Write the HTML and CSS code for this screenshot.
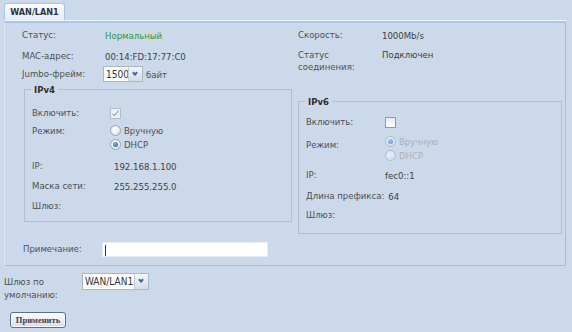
FILE: index.html
```html
<!DOCTYPE html>
<html lang="ru">
<head>
    <meta charset="UTF-8">
    <title>WAN/LAN1</title>
    <link rel="stylesheet" href="styles.css">
</head>
<body>
    <div class="tab-strip">
        <div class="tab">WAN/LAN1</div>
    </div>
    <div class="strip-line"></div>

    <div class="panel">
        <div class="columns">
            <div class="col col-left">
                <div class="row r22">
                    <span class="label">Статус:</span>
                    <span class="value ok">Нормальный</span>
                </div>
                <div class="row r20">
                    <span class="label">MAC-адрес:</span>
                    <span class="value">00:14:FD:17:77:C0</span>
                </div>
                <div class="row r16">
                    <span class="label">Jumbo-фрейм:</span>
                    <span class="combo combo-mtu">
                        <span class="combo-text">1500</span>
                        <span class="combo-trigger"></span>
                    </span>
                    <span class="unit">байт</span>
                </div>

                <fieldset class="group ipv4">
                    <legend>IPv4</legend>
                    <div class="row r20">
                        <span class="label">Включить:</span>
                        <span class="check checked disabled"></span>
                    </div>
                    <div class="row mode">
                        <span class="label">Режим:</span>
                        <div class="radios">
                            <label class="radio-line"><span class="radio"></span>Вручную</label>
                            <label class="radio-line"><span class="radio on"></span>DHCP</label>
                        </div>
                    </div>
                    <div class="row r20 gap5">
                        <span class="label">IP:</span>
                        <span class="value pad">192.168.1.100</span>
                    </div>
                    <div class="row r20">
                        <span class="label">Маска сети:</span>
                        <span class="value pad">255.255.255.0</span>
                    </div>
                    <div class="row r20">
                        <span class="label">Шлюз:</span>
                    </div>
                </fieldset>
            </div>

            <div class="col col-right">
                <div class="row r22">
                    <span class="label">Скорость:</span>
                    <span class="value">1000Mb/s</span>
                </div>
                <div class="row two-line">
                    <span class="label">Статус<br>соединения:</span>
                    <span class="value">Подключен</span>
                </div>

                <fieldset class="group ipv6">
                    <legend>IPv6</legend>
                    <div class="row r20">
                        <span class="label">Включить:</span>
                        <span class="check"></span>
                    </div>
                    <div class="row mode mode6">
                        <span class="label">Режим:</span>
                        <div class="radios disabled">
                            <label class="radio-line"><span class="radio on"></span>Вручную</label>
                            <label class="radio-line"><span class="radio"></span>DHCP</label>
                        </div>
                    </div>
                    <div class="row r20 gap3">
                        <span class="label">IP:</span>
                        <span class="value">fec0::1</span>
                    </div>
                    <div class="row r22">
                        <span class="label wide">Длина префикса:</span>
                        <span class="value">64</span>
                    </div>
                    <div class="row r16">
                        <span class="label">Шлюз:</span>
                    </div>
                </fieldset>
            </div>
        </div>

        <div class="row r16 note">
            <span class="label">Примечание:</span>
            <span class="text-field"><span class="caret"></span></span>
        </div>
    </div>

    <div class="row gateway">
        <span class="label">Шлюз по<br>умолчанию:</span>
        <span class="combo combo-gw">
            <span class="combo-text">WAN/LAN1</span>
            <span class="combo-trigger"></span>
        </span>
    </div>

    <button class="apply">Применить</button>
</body>
</html>
```

FILE: styles.css
```css
body {
    margin: 0;
    padding: 0 6px 0 4px;
    background: #cbd9ea;
    font-family: 'DejaVu Sans Condensed', 'Liberation Sans', sans-serif;
    font-size: 9.5px;
    color: #3a3a3a;
}
.tab-strip {
    height: 20px;
    display: flex;
    align-items: flex-end;
}
.tab {
    width: 59px;
    height: 16px;
    line-height: 17px;
    text-align: center;
    font-weight: bold;
    font-size: 9px;
    color: #2e3440;
    border: 1px solid #aac3e6;
    border-bottom: none;
    border-radius: 3px 3px 0 0;
    background: linear-gradient(#fbfdff, #e3ecf7);
}
.strip-line {
    height: 1px;
    background: #eef4fb;
    border-bottom: 2px solid #aac6ee;
}
.panel {
    border-left: 1px solid #dfe8f2;
    border-right: 1px solid #adbccd;
    border-bottom: 1px solid #adbccd;
    padding-bottom: 8px;
}
.columns {
    display: flex;
}
.col-left {
    width: 270px;
    padding: 1px 0 0 17px;
}
.col-right {
    flex: 1;
    padding: 1px 3px 0 6px;
}
.row {
    display: flex;
    align-items: center;
}
.r22 { height: 22px; }
.r20 { height: 20px; }
.r16 { height: 16px; }
.gap5 { margin-top: 5px; }
.gap3 { margin-top: 3px; }
.label {
    width: 81px;
    flex-shrink: 0;
    color: #505050;
    line-height: 12px;
    white-space: nowrap;
}
.col-right > .row > .label {
    width: 82px;
}
.value {
    padding-left: 2px;
    color: #3f3f3f;
}
.value.ok {
    color: #2f9a2f;
}
.two-line {
    align-items: flex-start;
    padding-top: 3px;
    height: 26px;
}
.two-line .label,
.two-line .value {
    line-height: 12px;
}

/* combo box */
.combo {
    display: flex;
    height: 16px;
    border: 1px solid #a9b6c6;
    box-sizing: border-box;
    background: #fff;
}
.combo-text {
    flex: 1;
    min-width: 0;
    overflow: hidden;
    white-space: nowrap;
    padding-left: 2px;
    line-height: 15px;
    font-size: 10px;
    color: #333;
}
.combo-trigger {
    width: 13px;
    flex-shrink: 0;
    border-left: 1px solid #c3cbd6;
    background: linear-gradient(#f4f5f7, #d7dbe2);
    position: relative;
}
.combo-trigger::after {
    content: "";
    position: absolute;
    left: 4px;
    top: 4px;
    width: 2px;
    height: 2px;
    border-right: 2px solid #3a66b4;
    border-bottom: 2px solid #3a66b4;
    transform: rotate(45deg);
}
.combo-mtu {
    width: 40px;
}
.combo-gw {
    width: 67px;
    height: 17px;
}
.combo-gw .combo-text {
    line-height: 16px;
}
.unit {
    margin-left: 3px;
    color: #505050;
}

/* fieldsets */
.group {
    margin: 1px 0 0 2px;
    padding: 7px 0 5px 7px;
    border: 1px solid #b3bfcd;
    min-width: 0;
}
.group legend {
    padding: 0 3px;
    margin-left: -1px;
    font-weight: bold;
    color: #2e2e2e;
    line-height: 13px;
}
.ipv4 .label {
    width: 78px;
}
.ipv4 .value.pad {
    padding-left: 4px;
}
.ipv6 {
    margin: 20px 0 0 0;
    padding: 4px 0 10px 7px;
}
.ipv6 .label {
    width: 79px;
}
.ipv6 .label.wide {
    width: auto;
    margin-right: 4px;
}
.ipv6 .value {
    padding-left: 0;
}

.mode {
    align-items: flex-start;
}
.mode .label {
    line-height: 14px;
    padding-top: 1px;
}
.mode6 {
    margin-top: 2px;
}
.mode6 .label {
    padding-top: 4px;
}
.radios {
    display: flex;
    flex-direction: column;
}
.radio-line {
    display: flex;
    align-items: center;
    height: 14px;
    color: #505050;
}
.radios.disabled .radio-line {
    color: #a8b0bb;
}
.radios.disabled .radio {
    opacity: 0.55;
}

/* custom checkbox and radio */
.check {
    width: 9px;
    height: 9px;
    border: 1px solid #8d98a8;
    background: linear-gradient(#e7eaef, #ffffff);
    position: relative;
}
.check.disabled {
    border-color: #b4bdca;
    background: #eef1f5;
}
.check.checked::after {
    content: "";
    position: absolute;
    left: 3px;
    top: 0;
    width: 2px;
    height: 6px;
    border-right: 1px solid #8d9bb5;
    border-bottom: 1px solid #8d9bb5;
    transform: rotate(40deg);
}
.radio {
    width: 9px;
    height: 9px;
    margin-right: 3px;
    border: 1px solid #9aa3b1;
    border-radius: 50%;
    background: radial-gradient(circle at 40% 35%, #ffffff, #d5dbe4);
    position: relative;
}
.radio.on::after {
    content: "";
    position: absolute;
    left: 2px;
    top: 2px;
    width: 5px;
    height: 5px;
    border-radius: 50%;
    background: radial-gradient(circle at 40% 35%, #7fb0ea, #1f5cb0);
}

/* note */
.note {
    margin: 7px 0 0 18px;
}
.note .label {
    width: 79px;
}
.text-field {
    width: 166px;
    height: 15px;
    box-sizing: border-box;
    background: #fff;
    border: 1px solid #e9edf3;
    padding: 2px 0 0 2px;
}
.caret {
    display: block;
    width: 1px;
    height: 11px;
    background: #333;
}

/* default gateway */
.gateway {
    margin-top: 7px;
    align-items: flex-start;
}
.gateway .label {
    width: 78px;
    padding-top: 2px;
    line-height: 13px;
}

.apply {
    display: block;
    margin: 11px 0 0 6px;
    width: 56px;
    height: 16px;
    padding: 0;
    border: 1px solid #5c6f8e;
    border-radius: 3px;
    background: linear-gradient(#fdfdfe, #d9dde4);
    box-shadow: inset 0 0 0 1px #f6f8fb;
    font-family: 'Liberation Serif', 'Times New Roman', serif;
    font-size: 8.5px;
    font-weight: bold;
    color: #3d4250;
    cursor: pointer;
}
```
